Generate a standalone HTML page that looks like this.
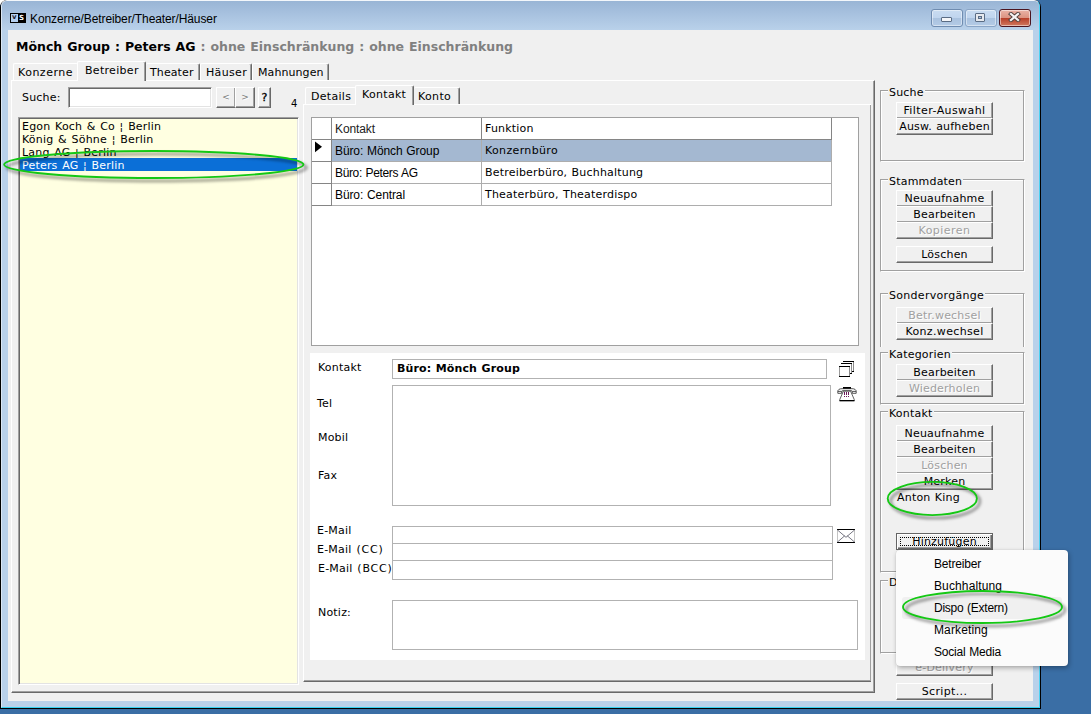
<!DOCTYPE html>
<html><head><meta charset="utf-8"><title>Konzerne/Betreiber/Theater/Häuser</title>
<style>
*{box-sizing:border-box;margin:0;padding:0}
html,body{width:1091px;height:714px;overflow:hidden;background:#3a6ea5}
body{position:relative;font-family:"DejaVu Sans","Liberation Sans",sans-serif;font-size:11px;letter-spacing:.2px;word-spacing:.6px;color:#000}
.a{position:absolute}
.t{position:absolute;white-space:nowrap;line-height:13px}
.seg{font-family:"Liberation Sans","DejaVu Sans",sans-serif;letter-spacing:-.1px;font-size:12px;line-height:14px}
#win{left:0;top:0;width:1041px;height:709px;background:#000;border-radius:7px 7px 0 0}
#glass{left:1px;top:0;width:1039px;height:708px;background:#b9d1ea;border-top:1px solid #f3f7fb;border-left:1px solid #dbe7f4;border-right:1px solid #4fd3f3;border-bottom:1px solid #35d2f2;border-radius:6px 6px 0 0;overflow:hidden}
#cap{left:0;top:0;width:1037px;height:29px;background:linear-gradient(#99b5d5 0,#a6c0de 40%,#b9d1ea 100%)}
#client{left:8px;top:30px;width:1025px;height:671px;background:#f0f0f0}
/* classic 3D */
.btn{position:absolute;background:#f0f0f0;border:1px solid;border-color:#fff #696969 #696969 #fff;box-shadow:inset -1px -1px 0 #a0a0a0;text-align:center;line-height:13px;white-space:nowrap;height:17px;width:97px;left:896px;padding-top:1px}
.btn.dis{color:#a0a0a0;text-shadow:1px 1px 0 #fff}
.sunk{position:absolute;background:#fff;border:1px solid;border-color:#a0a0a0 #fff #fff #a0a0a0;box-shadow:inset 1px 1px 0 #696969,inset -1px -1px 0 #e3e3e3}
.flat{position:absolute;background:#fff;border:1px solid #b2b2b2}
.grp{position:absolute;left:880px;width:145px;border:1px solid;border-color:#a0a0a0 #fff #fff #a0a0a0;box-shadow:inset -1px -1px 0 #a0a0a0,inset 1px 1px 0 #fff}
.grp>span{position:absolute;left:7px;top:-5px;background:#f0f0f0;padding:0 1px 0 1px;line-height:13px;white-space:nowrap}
.page{position:absolute;border:1px solid;border-color:#fff #696969 #696969 #fff;box-shadow:inset -1px -1px 0 #a0a0a0}
.tab{position:absolute;height:17px;border:1px solid;border-color:#fff #696969 transparent #fff;border-bottom:0;box-shadow:inset -1px 0 0 #a0a0a0;border-radius:2px 2px 0 0;background:#f0f0f0;white-space:nowrap;line-height:13px;padding:2px 0 0 5px}
.tab.act{height:20px;padding-top:2px;z-index:2}
.mi{position:absolute;left:38px;white-space:nowrap}
</style></head><body>
<div class="a" style="left:0;top:0;width:5px;height:5px;background:#fff"></div>
<div id="win" class="a">
<div id="glass" class="a"><div id="cap" class="a"></div></div>
<!-- app icon -->
<div class="a" style="left:10px;top:13px;width:16px;height:10px;background:#000"></div>
<div class="a" style="left:11px;top:14px;width:7px;height:8px;background:#b4d0f0"></div>
<div class="t" style="left:12px;top:13px;font-size:7px;line-height:9px;font-weight:bold;letter-spacing:0;color:#223">v</div>
<div class="t" style="left:19px;top:14px;font-size:7px;line-height:9px;font-weight:bold;letter-spacing:0;color:#fff">S</div>
<div class="t seg" style="left:30px;top:12px">Konzerne/Betreiber/Theater/Häuser</div>
<!-- caption buttons -->
<div class="a" style="left:931px;top:9px;width:32px;height:18px;border:1px solid #6f8cb0;border-radius:3px;background:linear-gradient(#c9dcf1 0,#c0d5ee 48%,#a9c2df 52%,#b4cbe6 100%);box-shadow:inset 0 0 0 1px rgba(255,255,255,.45)"></div>
<div class="a" style="left:941px;top:17px;width:11px;height:5px;border:1px solid #5a6c84;border-radius:1px;background:#f4f6f9"></div>
<div class="a" style="left:965px;top:9px;width:32px;height:18px;border:1px solid #8aa5c6;border-radius:3px;background:linear-gradient(#c9dcf1 0,#c0d5ee 48%,#a9c2df 52%,#b4cbe6 100%);box-shadow:inset 0 0 0 1px rgba(255,255,255,.45)"></div>
<div class="a" style="left:975px;top:13px;width:10px;height:9px;border:1px solid #5a6c84;border-radius:1px;background:#e6e9ee"></div>
<div class="a" style="left:978px;top:16px;width:4px;height:3px;border:1px solid #5a6c84;background:#a9c2df"></div>
<div class="a" style="left:999px;top:9px;width:32px;height:18px;border:1px solid #4b1520;border-radius:3px;background:linear-gradient(#eab3a6 0,#dc9482 48%,#b8402a 52%,#d0795f 100%);box-shadow:inset 0 0 0 1px rgba(255,255,255,.5)"></div>
<svg class="a" style="left:1008px;top:12px" width="13" height="10" viewBox="0 0 13 10"><path d="M3 2 L10 8 M10 2 L3 8" stroke="#53433f" stroke-width="4.200" stroke-linecap="square"/><path d="M3 2 L10 8 M10 2 L3 8" stroke="#f4f4f4" stroke-width="2.300" stroke-linecap="square"/></svg>

<div id="client" class="a"></div>
<!-- heading -->
<div class="t" style="left:16px;top:39px;font-size:12.5px;font-weight:bold;letter-spacing:0;line-height:15px">Mönch Group : Peters AG <span style="color:#808080">: ohne Einschränkung : ohne Einschränkung</span></div>

<!-- outer tab control -->
<div class="page" style="left:11px;top:80px;width:864px;height:613px"></div>
<div class="tab" style="left:13px;top:63px;width:65px;box-shadow:none;border-right:0;letter-spacing:.5px;padding-left:4px">Konzerne</div>
<div class="tab act" style="left:77px;top:61px;width:69px;padding-left:7px;letter-spacing:.3px">Betreiber</div>
<div class="tab" style="left:146px;top:63px;width:54px;border-left:0;padding-left:4px;letter-spacing:.1px">Theater</div>
<div class="tab" style="left:200px;top:63px;width:52px;padding-left:5px;letter-spacing:.35px">Häuser</div>
<div class="tab" style="left:252px;top:63px;width:77px;padding-left:5px;letter-spacing:.08px">Mahnungen</div>

<!-- search row -->
<div class="t" style="left:22px;top:91px">Suche:</div>
<div class="sunk" style="left:68px;top:87px;width:144px;height:21px"></div>
<div class="btn" style="left:216px;top:87px;width:20px;height:21px;color:#7c7c7c;text-shadow:1px 1px 0 #fff;padding-top:3px;font-size:9px;letter-spacing:0">&lt;</div>
<div class="btn" style="left:235px;top:87px;width:20px;height:21px;color:#7c7c7c;text-shadow:1px 1px 0 #fff;padding-top:3px;font-size:9px;letter-spacing:0">&gt;</div>
<div class="btn" style="left:258px;top:87px;width:13px;height:21px;padding-top:3px;letter-spacing:0;-webkit-text-stroke:.35px #000;font-size:11px">?</div>
<div class="t" style="left:291px;top:98px;font-size:10px;letter-spacing:0;line-height:12px">4</div>

<!-- list -->
<div class="sunk" style="left:18px;top:117px;width:281px;height:568px;background:#ffffe1"></div>
<div class="t" style="left:22px;top:120px;word-spacing:.900px">Egon Koch &amp; Co ¦ Berlin</div>
<div class="t" style="left:22px;top:133px;word-spacing:1px">König &amp; Söhne ¦ Berlin</div>
<div class="t" style="left:22px;top:146px;word-spacing:.900px">Lang AG ¦ Berlin</div>
<div class="a" style="left:20px;top:158px;width:277px;height:13px;background:#0b6fd7"></div>
<div class="t" style="left:22px;top:159px;word-spacing:.900px;color:#fff">Peters AG ¦ Berlin</div>

<!-- inner tab control -->
<div class="page" style="left:303px;top:104px;width:568px;height:578px;border-right:0;box-shadow:inset -1px 0 0 #a0a0a0,inset 0 -1px 0 #a0a0a0"></div>
<div class="tab" style="left:305px;top:87px;width:51px;box-shadow:none;border-right:0;padding-left:5px;letter-spacing:.3px">Details</div>
<div class="tab act" style="left:355px;top:85px;width:59px;padding-left:6px;letter-spacing:.3px">Kontakt</div>
<div class="tab" style="left:414px;top:87px;width:46px;border-left:0;padding-left:4px;letter-spacing:.35px">Konto</div>

<!-- grid -->
<div class="a" style="left:311px;top:117px;width:548px;height:229px;background:#fff;border:1px solid #a0a0a0"></div>
<div class="a" style="left:332px;top:140px;width:499px;height:21px;background:#a4b8d1"></div>
<div class="a" style="left:312px;top:139px;width:520px;height:1px;background:#858585"></div>
<div class="a" style="left:312px;top:161px;width:520px;height:1px;background:#adadad"></div>
<div class="a" style="left:312px;top:183px;width:520px;height:1px;background:#adadad"></div>
<div class="a" style="left:312px;top:205px;width:520px;height:1px;background:#adadad"></div>
<div class="a" style="left:312px;top:161px;width:20px;height:1px;background:#858585"></div>
<div class="a" style="left:312px;top:183px;width:20px;height:1px;background:#858585"></div>
<div class="a" style="left:312px;top:205px;width:20px;height:1px;background:#858585"></div>
<div class="a" style="left:331px;top:118px;width:1px;height:88px;background:#858585"></div>
<div class="a" style="left:481px;top:118px;width:1px;height:88px;background:#adadad"></div>
<div class="a" style="left:831px;top:118px;width:1px;height:88px;background:#adadad"></div>
<div class="a" style="left:481px;top:118px;width:1px;height:22px;background:#858585"></div>
<div class="a" style="left:831px;top:118px;width:1px;height:22px;background:#858585"></div>
<svg class="a" style="left:315px;top:141px" width="8" height="12" viewBox="0 0 8 12"><path d="M0 0.500 L7 5.800 L0 11.200Z" fill="#000"/></svg>
<div class="t seg" style="left:335px;top:122px;color:#222">Kontakt</div>
<div class="t seg" style="left:335px;top:144px">Büro: Mönch Group</div>
<div class="t seg" style="left:335px;top:166px;letter-spacing:-.35px">Büro: Peters AG</div>
<div class="t seg" style="left:335px;top:188px">Büro: Central</div>
<div class="t" style="left:485px;top:122px">Funktion</div>
<div class="t" style="left:485px;top:144px;letter-spacing:.35px">Konzernbüro</div>
<div class="t" style="left:485px;top:166px">Betreiberbüro, Buchhaltung</div>
<div class="t" style="left:485px;top:188px">Theaterbüro, Theaterdispo</div>

<!-- detail panel -->
<div class="a" style="left:310px;top:353px;width:555px;height:307px;background:#fff"></div>
<div class="t" style="left:318px;top:361px">Kontakt</div>
<div class="flat" style="left:392px;top:359px;width:435px;height:20px"></div>
<div class="t" style="left:397px;top:362px;font-weight:bold;letter-spacing:.12px">Büro: Mönch Group</div>
<div class="flat" style="left:392px;top:385px;width:439px;height:121px"></div>
<div class="t" style="left:317px;top:397px">Tel</div>
<div class="t" style="left:318px;top:431px">Mobil</div>
<div class="t" style="left:318px;top:469px">Fax</div>
<div class="flat" style="left:392px;top:526px;width:441px;height:54px"></div>
<div class="a" style="left:393px;top:543px;width:439px;height:1px;background:#b2b2b2"></div>
<div class="a" style="left:393px;top:560px;width:439px;height:1px;background:#b2b2b2"></div>
<div class="t" style="left:317px;top:524px">E-Mail</div>
<div class="t" style="left:317px;top:543px">E-Mail<span style="letter-spacing:.85px"> (CC)</span></div>
<div class="t" style="left:318px;top:562px">E-Mail<span style="letter-spacing:.8px"> (BCC)</span></div>
<div class="flat" style="left:392px;top:600px;width:466px;height:50px"></div>
<div class="t" style="left:318px;top:606px">Notiz:</div>
<!-- icons -->
<svg class="a" style="left:838px;top:360px" width="18" height="18" viewBox="0 0 18 18" shape-rendering="crispEdges"><rect x="5" y="1" width="11" height="11" fill="#fff"/><rect x="5" y="1" width="11" height="1" fill="#000"/><rect x="15" y="2" width="1" height="10" fill="#8a8a8a"/><rect x="14" y="11" width="2" height="1" fill="#000"/>
<rect x="3" y="3" width="11" height="11" fill="#fff"/><rect x="3" y="3" width="11" height="1" fill="#000"/><rect x="13" y="4" width="1" height="10" fill="#8a8a8a"/><rect x="12" y="13" width="2" height="1" fill="#000"/>
<rect x="1" y="6" width="11" height="11" fill="#fff"/><rect x="1" y="6" width="11" height="1" fill="#000"/><rect x="1" y="16" width="11" height="1" fill="#000"/><rect x="1" y="7" width="1" height="9" fill="#9a9a9a"/><rect x="11" y="7" width="1" height="9" fill="#8a8a8a"/></svg>
<svg class="a" style="left:837px;top:386px" width="20" height="16" viewBox="0 0 20 16"><path d="M.8 5.500C.8 3.600 2.500 2.700 5 2.700H15C17.500 2.700 19.200 3.600 19.200 5.500V7.300H15.300V5.600C15.300 4.900 14.700 4.700 14 4.700H6C5.300 4.700 4.700 4.900 4.700 5.600V7.300H.8Z" fill="#fff" stroke="#2a2a2a" stroke-width=".8"/><path d="M.8 5.400H4.600M15.400 5.400H19.200" stroke="#2a2a2a" stroke-width=".8"/><rect x="6" y="1" width="8" height="1.700" fill="#000"/><path d="M6.400 5.200L2.800 13.400V14.600H17.200V13.400L13.600 5.200Z" fill="#fff" stroke="#3a3a3a" stroke-width=".8"/><rect x="2.500" y="14" width="15" height="1.300" fill="#000"/><g fill="#6a1a5a" shape-rendering="crispEdges"><rect x="7" y="6" width="1" height="3"/><rect x="9" y="6" width="1" height="3"/><rect x="11" y="6" width="1" height="3"/><rect x="7" y="10" width="1" height="1"/><rect x="9" y="10" width="1" height="1"/><rect x="11" y="10" width="1" height="1"/></g></svg>
<svg class="a" style="left:836px;top:528px" width="20" height="16" viewBox="0 0 20 16"><rect x="1" y="1" width="18" height="14" fill="#fff"/><g shape-rendering="crispEdges"><rect x="1" y="1" width="18" height="1" fill="#000"/><rect x="1" y="14" width="18" height="1" fill="#000"/><rect x="1" y="2" width="1" height="12" fill="#c4c4c4"/><rect x="18" y="2" width="1" height="12" fill="#c4c4c4"/></g><path d="M1.500 2l8.500 7.300 8.500-7.300M1.500 14l7.200-6.200M18.500 14l-7.200-6.200" fill="none" stroke="#4a4a5a" stroke-width=".75"/></svg>

<!-- right panel -->
<div class="grp" style="top:90px;height:72px"><span>Suche</span></div>
<div class="btn" style="top:102px;letter-spacing:.42px">Filter-Auswahl</div>
<div class="btn" style="top:118px">Ausw. aufheben</div>

<div class="grp" style="top:179px;height:93px"><span>Stammdaten</span></div>
<div class="btn" style="top:190px">Neuaufnahme</div>
<div class="btn" style="top:206px">Bearbeiten</div>
<div class="btn dis" style="top:222px;letter-spacing:.45px">Kopieren</div>
<div class="btn" style="top:246px">Löschen</div>

<div class="grp" style="top:293px;height:60px"><span style="letter-spacing:.3px">Sondervorgänge</span></div>
<div class="btn dis" style="top:307px">Betr.wechsel</div>
<div class="btn" style="top:323px;letter-spacing:.35px">Konz.wechsel</div>
<div class="a" style="left:880px;top:347px;width:146px;height:7px;background:#f0f0f0"></div>

<div class="grp" style="top:352px;height:53px"><span>Kategorien</span></div>
<div class="btn" style="top:364px">Bearbeiten</div>
<div class="btn dis" style="top:380px">Wiederholen</div>

<div class="grp" style="top:411px;height:162px"><span>Kontakt</span></div>
<div class="btn" style="top:425px">Neuaufnahme</div>
<div class="btn" style="top:441px">Bearbeiten</div>
<div class="btn dis" style="top:457px">Löschen</div>
<div class="btn" style="top:473px">Merken</div>
<div class="t" style="left:897px;top:491px">Anton King</div>
<div class="btn" style="top:533px;border-color:#646464;box-shadow:inset 1px 1px 0 #fff,inset -1px -1px 0 #696969,inset -2px -2px 0 #a0a0a0">Hinzufügen</div>
<div class="a" style="left:900px;top:537px;width:89px;height:9px;border:1px dotted #000"></div>

<div class="grp" style="top:580px;height:74px"><span>D</span></div>
<div class="btn dis" style="top:659px">e-Delivery</div>
<div class="btn" style="top:683px;letter-spacing:.35px">Script...</div>
</div>

<!-- popup menu -->
<div class="a" style="left:896px;top:550px;width:172px;height:116px;background:#fbfbfb;border-radius:4px;box-shadow:1px 2px 5px rgba(0,0,0,.3),0 0 1px rgba(0,0,0,.2)">
<div class="a" style="left:6px;top:47px;width:160px;height:22px;background:#f0f0f0;border-radius:3px"></div>
<div class="mi seg" style="top:7px;letter-spacing:-.17px">Betreiber</div>
<div class="mi seg" style="top:29px;letter-spacing:.12px">Buchhaltung</div>
<div class="mi seg" style="top:51px;letter-spacing:-.25px">Dispo (Extern)</div>
<div class="mi seg" style="top:73px;letter-spacing:.12px">Marketing</div>
<div class="mi seg" style="top:95px;letter-spacing:-.2px">Social Media</div>
</div>

<!-- green highlight ellipses -->
<svg class="a" style="left:0;top:0;pointer-events:none" width="1091" height="714" viewBox="0 0 1091 714">
<defs><filter id="sh" x="-10%" y="-30%" width="120%" height="170%"><feGaussianBlur stdDeviation="1.600"/></filter></defs>
<g fill="none" stroke="#000" stroke-opacity=".42" stroke-width="2.500" filter="url(#sh)" transform="translate(3,3)">
<ellipse cx="153.800" cy="164.500" rx="149.700" ry="13.500"/><ellipse cx="932.300" cy="498.500" rx="44.600" ry="16.600"/><ellipse cx="982.500" cy="607" rx="79.500" ry="16"/></g>
<g fill="none" stroke="#14c814" stroke-width="1.850">
<ellipse cx="153.800" cy="164.500" rx="149.700" ry="13.500"/><ellipse cx="932.300" cy="498.500" rx="44.600" ry="16.600"/><ellipse cx="982.500" cy="607" rx="79.500" ry="16"/></g>
</svg>
</body></html>
